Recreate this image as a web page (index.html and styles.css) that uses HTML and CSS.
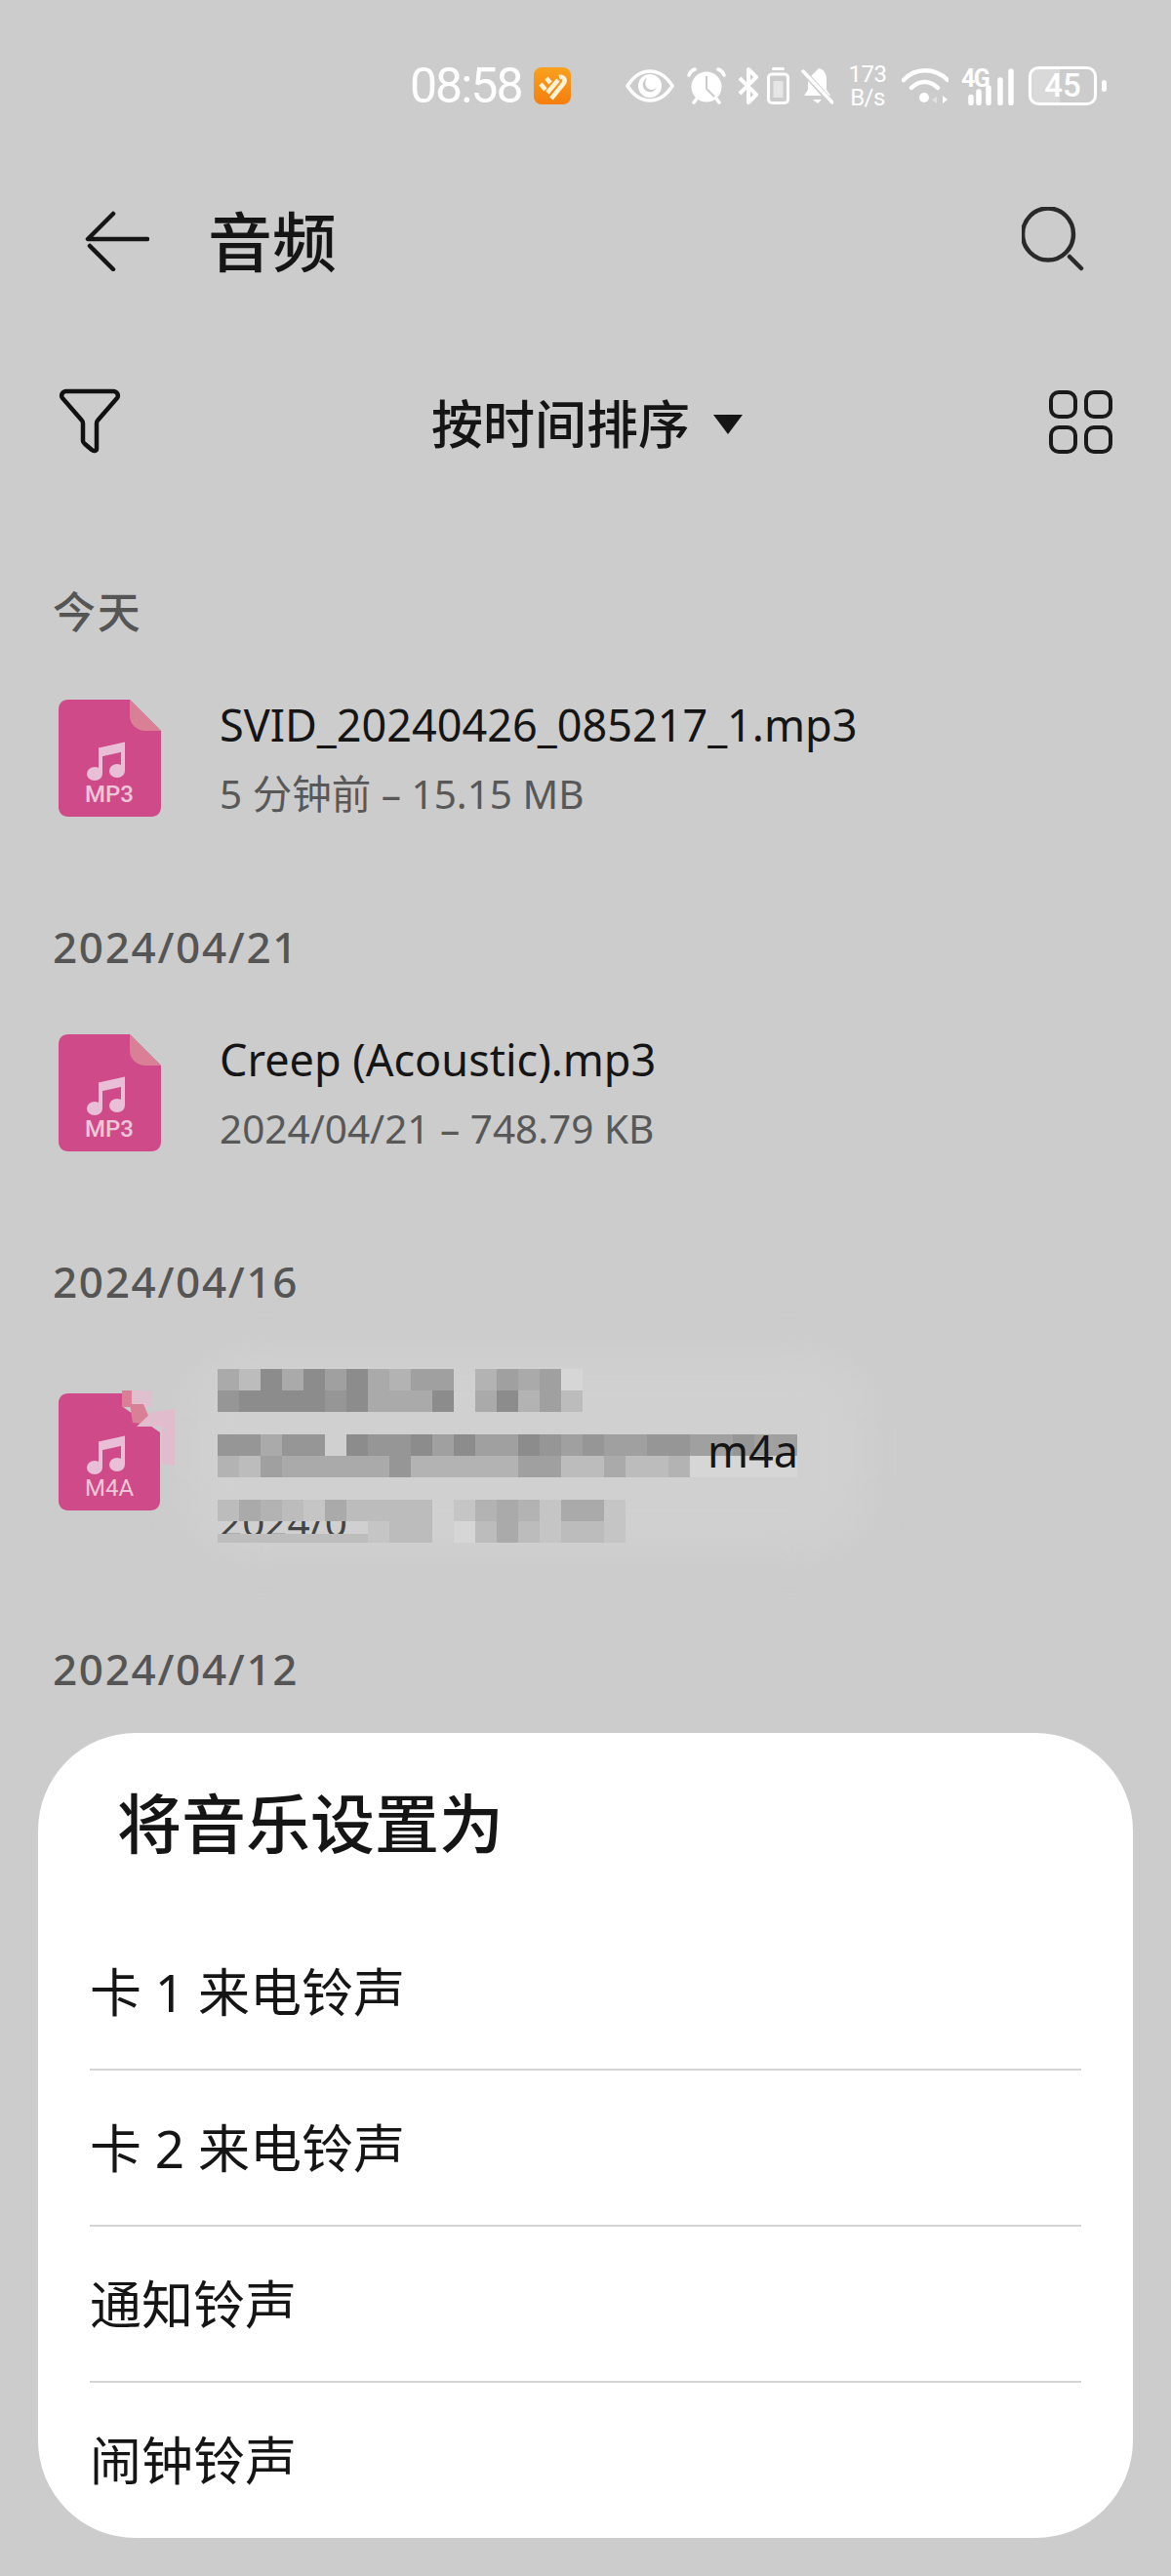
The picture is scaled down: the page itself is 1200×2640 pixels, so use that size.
FILE: index.html
```html
<!DOCTYPE html>
<html lang="zh-CN">
<head>
    <meta charset="UTF-8">
    <meta name="viewport" content="width=device-width, initial-scale=1.0">
    <title>音频</title>
    <link rel="stylesheet" href="styles.css">
</head>
<body>
<div class="screen">
    <div class="statusbar">
        <span class="clock">08:58</span>
        <svg class="st-badge" width="38" height="38" viewBox="0 0 38 38">
            <defs><linearGradient id="bg1" x1="0" y1="0" x2="0" y2="1"><stop offset="0" stop-color="#f9a11f"/><stop offset="1" stop-color="#f57e0e"/></linearGradient></defs>
            <rect width="38" height="38" rx="8" fill="url(#bg1)"/>
            <path d="M7 17l5 6M13 11l4 5M18 32l13-16c2-4-1-7-5-6M14 26l11-13" stroke="#fff3d8" stroke-width="4.5" fill="none"/>
        </svg>
        <svg class="st-eye" width="50" height="34" viewBox="0 0 50 34">
            <path d="M2 17C9 6 16 2 25 2s16 4 23 15c-7 11-14 15-23 15S9 28 2 17z" fill="none" stroke="#fff" stroke-width="3.5"/>
            <circle cx="25" cy="17" r="12" fill="#fff"/>
            <path d="M22 9c-3 4-2 11 4 12 3 0 5-1 6-3-2 7-12 7-14 0-1-4 1-8 4-9z" fill="#ccc"/>
        </svg>
        <svg class="st-alarm" width="40" height="38" viewBox="0 0 40 38">
            <circle cx="20" cy="20" r="15.5" fill="#fff"/>
            <path d="M2 8c1-3 3-5 6-6M38 8c-1-3-3-5-6-6M7 36l3-4M33 36l-3-4" stroke="#fff" stroke-width="3.5" stroke-linecap="round" fill="none"/>
            <path d="M20 9v13l8 8" stroke="#ccc" stroke-width="2" fill="none"/>
        </svg>
        <svg class="st-bt" width="21" height="38" viewBox="0 0 21 38">
            <path d="M2 11l17 17-8 8V2l8 8L2 27" fill="none" stroke="#fff" stroke-width="4" stroke-linejoin="round"/>
        </svg>
        <svg class="st-cell" width="23" height="38" viewBox="0 0 23 38">
            <rect x="5" y="0" width="13" height="3" rx="1.5" fill="#fff"/>
            <rect x="1.5" y="7" width="20" height="29.5" rx="3.5" fill="none" stroke="#fff" stroke-width="3"/>
            <rect x="6.5" y="14" width="10" height="17" fill="#fff" opacity=".5"/>
        </svg>
        <svg class="st-bell" width="33" height="38" viewBox="0 0 33 38">
            <path d="M18 1c5 1 8 5 8 11v11l4 6H3l4-6V12z" fill="#fff"/>
            <path d="M12 33h9l-4 4z" fill="#fff"/>
            <path d="M1 3l30 33" stroke="#ccc" stroke-width="6"/>
            <path d="M2 4l30 32" stroke="#fff" stroke-width="3.5" stroke-linecap="round"/>
        </svg>
        <span class="st-speed">173<br>B/s</span>
        <svg class="st-wifi" width="48" height="38" viewBox="0 0 48 38">
            <path d="M2 13c12-13 32-13 45 0M10 21c8-8 19-8 27 0" fill="none" stroke="#fff" stroke-width="4.5" stroke-linecap="round"/>
            <circle cx="23" cy="31" r="5" fill="#fff"/>
            <path d="M36 30l-5 3.5 5 3.5z" fill="#fff" opacity=".4"/>
            <path d="M42 29l5 4-5 4z" fill="#fff"/>
        </svg>
        <svg class="st-signal" width="54" height="42" viewBox="0 -4 54 42">
            <text x="0" y="19" class="st-net">4G</text>
            <path d="M10 29.5v6M18 24v11.5M28 20v15.5M40 12v23.5M51 3v32.5" stroke="#fff" stroke-width="5.5" stroke-linecap="round"/>
        </svg>
        <div class="st-battery"><span>45</span></div>
        <span class="st-tip"></span>
    </div>

    <header class="topbar">
        <svg class="ic-back" width="66" height="62" viewBox="0 0 66 62">
            <path d="M29 3L3 29h61M5 36l24 24" fill="none" stroke="#151515" stroke-width="4.5" stroke-linecap="round" stroke-linejoin="round"/>
        </svg>
        <h1>音频</h1>
        <svg class="ic-search" width="66" height="66" viewBox="0 0 66 66">
            <ellipse cx="27" cy="28" rx="26" ry="26.5" fill="none" stroke="#2a2a2a" stroke-width="4.5"/>
            <path d="M49 51l12 12" stroke="#2a2a2a" stroke-width="4.5" stroke-linecap="round"/>
        </svg>
    </header>

    <div class="toolbar">
        <svg class="ic-filter" width="64" height="68" viewBox="0 0 64 68">
            <path d="M8 3H56c4 0 6 4 4 7L40 33c-1 1-1 2-1 3V62c0 2-3 3-5 1l-7-6c-1-1-2-2-2-3V36c0-1 0-2-1-3L4 10C2 7 4 3 8 3z" fill="none" stroke="#111" stroke-width="4.5"/>
        </svg>
        <div class="sort">
            <span>按时间排序</span>
            <i class="sort-caret"></i>
        </div>
        <div class="ic-grid"><i></i><i></i><i></i><i></i></div>
    </div>

    <main class="list">
        <section class="group">
            <h2>今天</h2>
            <div class="file">
                <svg class="file-icon" width="106" height="120" viewBox="0 0 106 120">
                    <path d="M10 0h63l32 32v78c0 6-4 10-10 10H10c-6 0-10-4-10-10V10C0 4 4 0 10 0z" fill="#cf4a88"/>
                    <path d="M73 0l32 32H89c-9 0-16-7-16-15z" fill="#d98097"/>
                    <path d="M43 76V51l23-5v27" fill="none" stroke="#e8bfd6" stroke-width="4"/>
                    <path d="M41 50l27-6v9l-27 6z" fill="#e8bfd6"/>
                    <ellipse cx="37" cy="76" rx="8" ry="7" fill="#e8bfd6"/>
                    <ellipse cx="60" cy="73" rx="8" ry="7" fill="#e8bfd6"/>
                    <text x="52" y="105" class="file-ext">MP3</text>
                </svg>
                <div class="file-text">
                    <div class="file-name">SVID_20240426_085217_1.mp3</div>
                    <div class="file-meta">5 分钟前 – 15.15 MB</div>
                </div>
            </div>
        </section>

        <section class="group">
            <h2>2024/04/21</h2>
            <div class="file">
                <svg class="file-icon" width="106" height="120" viewBox="0 0 106 120">
                    <path d="M10 0h63l32 32v78c0 6-4 10-10 10H10c-6 0-10-4-10-10V10C0 4 4 0 10 0z" fill="#cf4a88"/>
                    <path d="M73 0l32 32H89c-9 0-16-7-16-15z" fill="#d98097"/>
                    <path d="M43 76V51l23-5v27" fill="none" stroke="#e8bfd6" stroke-width="4"/>
                    <path d="M41 50l27-6v9l-27 6z" fill="#e8bfd6"/>
                    <ellipse cx="37" cy="76" rx="8" ry="7" fill="#e8bfd6"/>
                    <ellipse cx="60" cy="73" rx="8" ry="7" fill="#e8bfd6"/>
                    <text x="52" y="105" class="file-ext">MP3</text>
                </svg>
                <div class="file-text">
                    <div class="file-name">Creep (Acoustic).mp3</div>
                    <div class="file-meta">2024/04/21 – 748.79 KB</div>
                </div>
            </div>
        </section>

        <section class="group">
            <h2>2024/04/16</h2>
            <div class="file file-tall">
                <div class="mosaic-haze"></div>
                <svg class="file-icon" width="124" height="140" viewBox="0 0 124 140">
                    <path d="M10 20H66V34L104 60V130c0 6-4 10-10 10H10c-6 0-10-4-10-10V30c0-6 4-10 10-10z" fill="#cf4a88"/>
                    <path d="M65 17h10v17H65z" fill="#d98097"/>
                    <path d="M75 17h21v17H75z" fill="#e0c0cf"/>
                    <path d="M73 31h14l9 21-20-2z" fill="#d98097"/>
                    <path d="M80 54L96 39l23-3v58l-13-2V54z" fill="#e0bccd"/>
                    <path d="M43 96V71l23-5v27" fill="none" stroke="#e8bfd6" stroke-width="4"/>
                    <path d="M41 70l27-6v9l-27 6z" fill="#e8bfd6"/>
                    <ellipse cx="37" cy="96" rx="8" ry="7" fill="#e8bfd6"/>
                    <ellipse cx="60" cy="93" rx="8" ry="7" fill="#e8bfd6"/>
                    <text x="52" y="125" class="file-ext file-ext-thin">M4A</text>
                </svg>
                <div class="file-text">
                    <div class="file-name">&nbsp;</div>
                    <div class="file-name file-name-end">m4a</div>
                    <div class="file-meta file-meta-cut">2024/0</div>
                </div>
                <div class="mosaic mosaic-a">
                    <i class="d"></i><i class="f"></i><i class="a"></i><i class="d"></i><i class="a"></i><i class="c"></i><i class="a"></i><i class="d"></i><i class="e"></i><i class="c"></i><i class="c"></i><i class="n"></i><i class="e"></i><i class="c"></i><i class="d"></i><i class="c"></i><i class="h"></i>
                    <i class="b"></i><i class="a"></i><i class="a"></i><i class="a"></i><i class="a"></i><i class="b"></i><i class="a"></i><i class="d"></i><i class="d"></i><i class="d"></i><i class="a"></i><i class="n"></i><i class="d"></i><i class="a"></i><i class="e"></i><i class="c"></i><i class="f"></i>
                </div>
                <div class="mosaic mosaic-b">
                    <i class="b"></i><i class="b"></i><i class="d"></i><i class="b"></i><i class="b"></i><i class="n"></i><i class="a"></i><i class="b"></i><i class="b"></i><i class="a"></i><i class="c"></i><i class="a"></i><i class="c"></i><i class="c"></i><i class="a"></i><i class="b"></i><i class="c"></i><i class="b"></i><i class="c"></i><i class="c"></i><i class="b"></i><i class="b"></i><i class="c"></i><i class="c"></i><i class="b"></i><i class="c"></i><i class="c"></i>
                </div>
                <div class="mosaic mosaic-c">
                    <i class="e"></i><i class="f"></i><i class="c"></i><i class="d"></i><i class="d"></i><i class="d"></i><i class="d"></i><i class="d"></i><i class="b"></i><i class="e"></i><i class="e"></i><i class="e"></i><i class="e"></i><i class="e"></i><i class="c"></i><i class="c"></i><i class="f"></i><i class="f"></i><i class="d"></i><i class="f"></i><i class="f"></i><i class="e"></i><i class="h"></i><i class="h"></i><i class="h"></i><i class="h"></i><i class="h"></i>
                </div>
                <div class="mosaic mosaic-d">
                    <i class="f"></i><i class="d"></i><i class="e"></i><i class="f"></i><i class="g"></i><i class="d"></i><i class="f"></i><i class="f"></i><i class="f"></i><i class="f"></i><i class="n"></i><i class="g"></i><i class="e"></i><i class="d"></i><i class="e"></i><i class="g"></i><i class="d"></i><i class="d"></i><i class="g"></i>
                    <i class="n"></i><i class="n"></i><i class="n"></i><i class="n"></i><i class="n"></i><i class="n"></i><i class="n"></i><i class="g"></i><i class="f"></i><i class="f"></i><i class="n"></i><i class="h"></i><i class="f"></i><i class="d"></i><i class="f"></i><i class="g"></i><i class="f"></i><i class="f"></i><i class="g"></i>
                </div>
                <div class="mosaic-strip"></div>
            </div>
        </section>

        <section class="group">
            <h2>2024/04/12</h2>
        </section>
    </main>

    <div class="sheet">
        <div class="sheet-title">将音乐设置为</div>
        <div class="sheet-option">卡 1 来电铃声</div>
        <div class="sheet-option">卡 2 来电铃声</div>
        <div class="sheet-option">通知铃声</div>
        <div class="sheet-option">闹钟铃声</div>
    </div>
</div>
</body>
</html>
```

FILE: styles.css
```css
* { box-sizing: border-box; }
body { margin: 0; background: #ccc; font-family: "Noto Sans", "Noto Sans CJK SC", sans-serif; color: #151515; }
.screen { position: relative; width: 1200px; height: 2640px; overflow: hidden; background: #ccc; }

.statusbar { display: flex; align-items: center; height: 44px; margin-top: 66px; padding-left: 420px; color: #fff; }
.clock { width: 127px; font-family: Roboto, sans-serif; font-size: 50px; line-height: 44px; letter-spacing: -2px; white-space: nowrap; }
.st-badge { margin-right: 56px; }
.st-eye { margin-right: 13px; }
.st-alarm { margin-right: 12px; }
.st-bt { margin-right: 9px; }
.st-cell { margin-right: 12px; }
.st-bell { margin-right: 15px; }
.st-speed { width: 40px; margin-right: 15px; font-family: Roboto, sans-serif; font-size: 24px; line-height: 24px; letter-spacing: -.5px; text-align: center; white-space: nowrap; }
.st-wifi { margin-right: 13px; }
.st-net { font-family: Roboto, sans-serif; font-size: 25px; font-weight: 700; letter-spacing: -1.5px; fill: #fff; }
.st-signal { margin-top: -2px; margin-right: 15px; }
.st-battery { display: flex; align-items: center; justify-content: center; width: 70px; height: 40px; border: 3px solid #fff; border-radius: 10px; background: linear-gradient(90deg, #d9d9d9 45%, #ccc 45%); font-family: Roboto, sans-serif; font-size: 33px; font-weight: 500; line-height: 34px; }
.st-tip { width: 5px; height: 12px; margin-left: 5px; border-radius: 3px; background: #fff; }

.topbar { display: flex; align-items: center; height: 80px; margin-top: 97px; padding: 0 87px; }
.topbar h1 { flex: 1; margin: 0 0 0 60px; font-size: 66px; font-weight: 500; line-height: 80px; }
.ic-search { margin-top: -4px; }

.toolbar { display: flex; align-items: center; justify-content: space-between; height: 70px; margin-top: 110px; padding: 0 60px 0 60px; }
.sort { display: flex; align-items: center; gap: 24px; margin-left: 4px; font-size: 53px; font-weight: 500; }
.sort-caret { width: 0; height: 0; margin-top: 6px; border-left: 15px solid transparent; border-right: 15px solid transparent; border-top: 20px solid #151515; }
.ic-grid { display: grid; grid-template-columns: 29px 29px; gap: 7px; }
.ic-grid i { height: 29px; border: 4.5px solid #1a1a1a; border-radius: 10px; }

.list { margin-top: 130px; padding: 0 54px; }
.group { margin-bottom: 73px; }
.group h2 { margin: 0 0 28px; height: 60px; font-size: 44px; font-weight: 500; letter-spacing: 1.7px; line-height: 60px; color: #555; }

.file { position: relative; display: flex; align-items: center; gap: 59px; height: 182px; margin-left: 6px; }
.file-icon { position: relative; flex: none; margin-top: 2px; }
.file-ext { font-family: Roboto, sans-serif; font-size: 24px; font-weight: 500; fill: #eec6da; text-anchor: middle; }
.file-ext-thin { font-weight: 400; }
.file-text { position: relative; padding-top: 4px; }
.file-name { font-size: 45px; line-height: 60px; color: #151515; white-space: nowrap; }
.file-meta { margin-top: 11px; font-size: 40.5px; line-height: 60px; color: #585858; white-space: nowrap; }

.file-tall { height: 236px; gap: 41px; align-items: flex-start; padding-top: 37px; }
.file-tall .file-icon { margin-top: 0; }
.file-tall .file-text { margin-top: -21px; padding-top: 0; }
.file-name-end { position: relative; z-index: 2; margin-left: 500px; margin-top: 10px; }
.file-meta-cut { margin-top: 13px; color: #444; }

.mosaic-haze { position: absolute; left: 130px; top: 15px; width: 700px; height: 205px; border-radius: 60px; background: #d0d0d0; filter: blur(20px); }
.mosaic { position: absolute; z-index: 1; display: grid; grid-auto-rows: 22px; grid-template-columns: repeat(auto-fill, 22px); left: 163px; }
.mosaic-a { top: 32px; width: 374px; }
.mosaic-b { top: 99px; width: 594px; }
.mosaic-c { top: 121px; width: 594px; }
.mosaic-d { top: 166px; width: 418px; }
.mosaic-strip { position: absolute; z-index: 1; left: 163px; top: 201px; width: 154px; height: 9px; background: #bdbdbd; }
.mosaic .a { background: #8c8c8c; }
.mosaic .b { background: #969696; }
.mosaic .c { background: #a0a0a0; }
.mosaic .d { background: #aaa; }
.mosaic .e { background: #b3b3b3; }
.mosaic .f { background: #bcbcbc; }
.mosaic .g { background: #c5c5c5; }
.mosaic .h { background: #d6d6d6; }
.mosaic .n { background: transparent; }

.sheet { position: absolute; left: 39px; top: 1776px; width: 1122px; height: 825px; border-radius: 100px; background: #fff; }
.sheet-title { height: 186px; padding: 44px 0 0 81px; font-size: 66px; font-weight: 500; line-height: 96px; color: #151515; }
.sheet-option { height: 160px; margin: 0 53px; font-size: 53px; line-height: 160px; color: #151515; border-bottom: 2px solid #d4d4d4; }
.sheet-option:last-child { border-bottom: none; }
```
